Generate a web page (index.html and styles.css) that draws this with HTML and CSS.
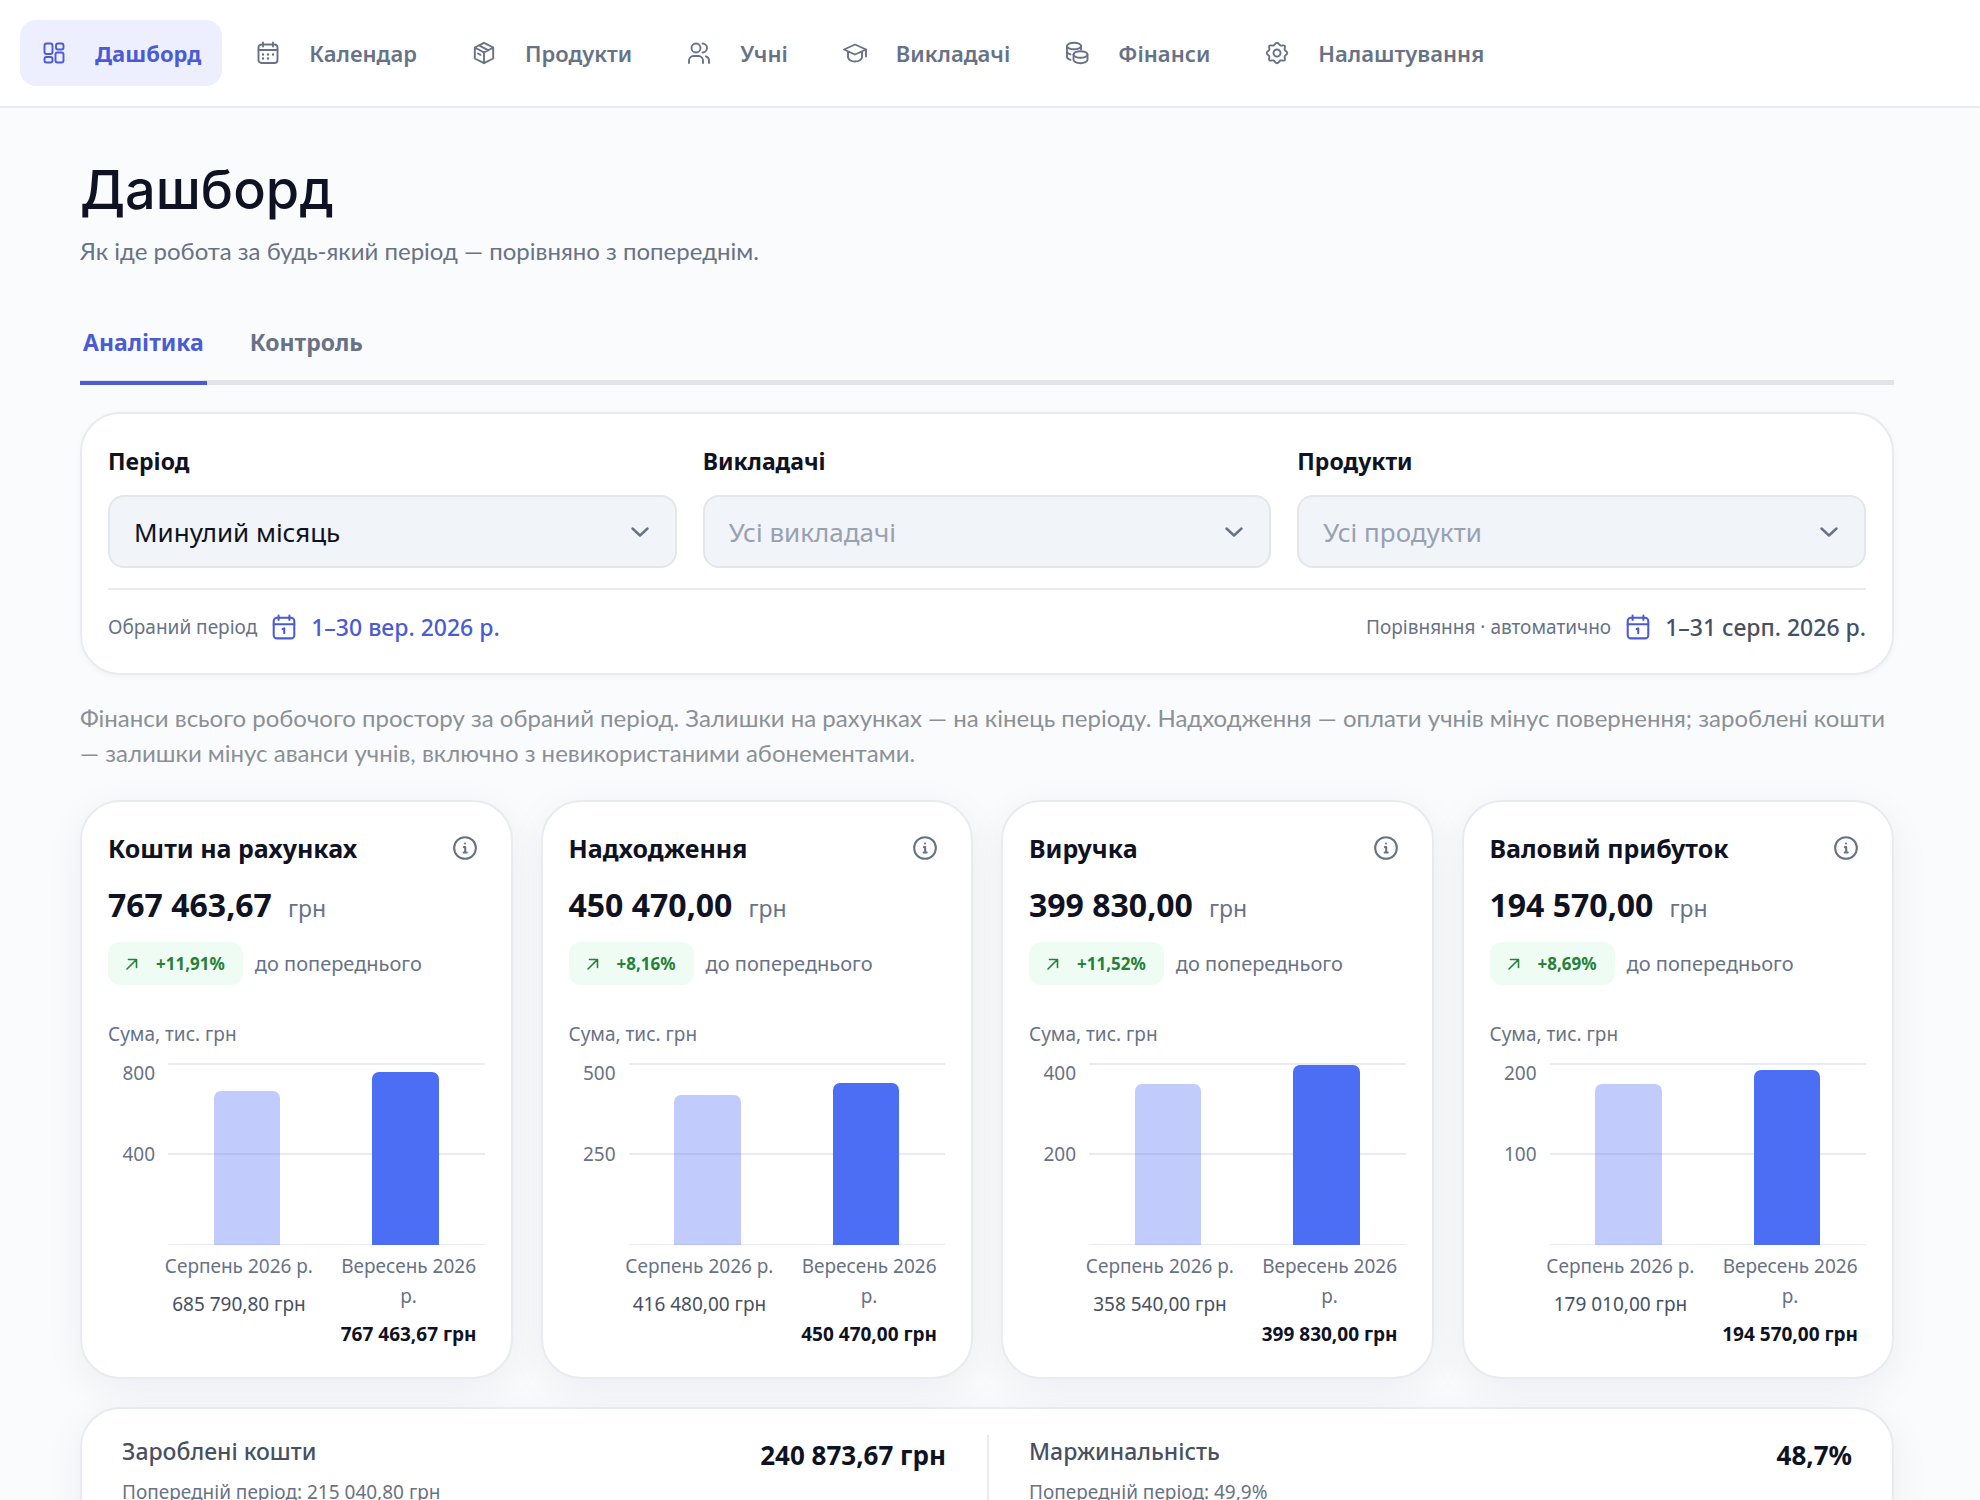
FILE: index.html
```html
<!DOCTYPE html>
<html lang="uk">
<head>
    <meta charset="UTF-8">
    <meta name="viewport" content="width=device-width, initial-scale=1.0">
    <title>Дашборд</title>
    <link rel="stylesheet" href="styles.css">
</head>
<body>
    <header class="topbar">
        <nav class="nav">
            <a href="#" class="nav-item active">
                <svg class="icon" viewBox="0 0 24 24"><rect x="2.5" y="2.5" width="8" height="10.5" rx="2"/><rect x="14" y="2.5" width="7.5" height="6" rx="2"/><rect x="2.5" y="16" width="8" height="5.5" rx="2"/><rect x="13.5" y="11.5" width="8" height="10" rx="2"/></svg>
                Дашборд
            </a>
            <a href="#" class="nav-item">
                <svg class="icon" viewBox="0 0 24 24"><path d="M7 1.5v4M17 1.5v4M2.5 9h19"/><rect x="2.5" y="3.5" width="19" height="18.5" rx="3"/><path class="dots" d="M7 13.5h.01M12 13.5h.01M17 13.5h.01M7 17.5h.01M12 17.5h.01"/></svg>
                Календар
            </a>
            <a href="#" class="nav-item">
                <svg class="icon" viewBox="0 0 24 24"><path d="M12 1.8l9.2 4.7v11L12 22.2l-9.2-4.7v-11zM2.8 6.5L12 11.5l9.2-5M12 11.5v10.7M7 4.3l9.5 5M6 12.500l2.500 1.300"/></svg>
                Продукти
            </a>
            <a href="#" class="nav-item">
                <svg class="icon" viewBox="0 0 24 24"><circle cx="9" cy="7" r="4.5"/><path d="M2 22v-2.5a4.5 4.5 0 0 1 4.5-4.5h5a4.5 4.5 0 0 1 4.500 4.500V22M15.500 2.500a4.500 4.500 0 0 1 0 9M19 15.300a4.500 4.500 0 0 1 3 4.200V22"/></svg>
                Учні
            </a>
            <a href="#" class="nav-item">
                <svg class="icon" viewBox="0 0 24 24"><path d="M1 8.500L12 3.500l11 5-11 5zM23 8.500v7M5 10.500v6c1 2.800 3.800 4 7 4s6-1.200 7-4v-6"/></svg>
                Викладачі
            </a>
            <a href="#" class="nav-item">
                <svg class="icon" viewBox="0 0 24 24"><ellipse cx="9" cy="5" rx="7" ry="3.300"/><path d="M2 5v5.500c0 1.300 1.500 2.300 3.500 2.900M16 5v3.500M2 10.500V16c0 1.300 1.500 2.300 3.500 2.900"/><ellipse cx="15.500" cy="13.500" rx="7" ry="3.300"/><path d="M8.500 13.500v5.200c0 1.900 3.100 3.500 7 3.500s7-1.600 7-3.500v-5.200"/></svg>
                Фінанси
            </a>
            <a href="#" class="nav-item">
                <svg class="icon" viewBox="0 0 24 24"><circle cx="12" cy="12" r="3.500"/><path d="M12 1.700c1.700 0 2 2.200 3.500 2.800s3.100-.8 4.100.2-.4 2.600.2 4.100 2.500 1.600 2.500 3.200-1.900 1.700-2.500 3.200.8 3.100-.2 4.100-2.600-.4-4.100.2-1.800 2.800-3.500 2.800-2-2.200-3.500-2.800-3.100.8-4.100-.2.4-2.600-.2-4.100S1.700 13.700 1.700 12s1.900-1.700 2.500-3.200-.8-3.100.2-4.100 2.600.4 4.100-.2S10.300 1.700 12 1.700z"/></svg>
                Налаштування
            </a>
        </nav>
    </header>

    <main class="page">
        <h1>Дашборд</h1>
        <p class="lead">Як іде робота за будь-який період — порівняно з попереднім.</p>

        <div class="tabs" role="tablist">
            <button class="tab active" role="tab" aria-selected="true">Аналітика</button>
            <button class="tab" role="tab" aria-selected="false">Контроль</button>
        </div>

        <section class="card filters">
            <div class="filter-grid">
                <div class="field">
                    <label for="period">Період</label>
                    <div class="select-wrap">
                        <select id="period"><option>Минулий місяць</option></select>
                        <svg class="chevron" viewBox="0 0 18 10"><path d="M1.500 1.500L9 8.500l7.500-7"/></svg>
                    </div>
                </div>
                <div class="field">
                    <label for="teachers">Викладачі</label>
                    <div class="select-wrap">
                        <select id="teachers" class="empty"><option>Усі викладачі</option></select>
                        <svg class="chevron" viewBox="0 0 18 10"><path d="M1.500 1.500L9 8.500l7.500-7"/></svg>
                    </div>
                </div>
                <div class="field">
                    <label for="products">Продукти</label>
                    <div class="select-wrap">
                        <select id="products" class="empty"><option>Усі продукти</option></select>
                        <svg class="chevron" viewBox="0 0 18 10"><path d="M1.500 1.500L9 8.500l7.500-7"/></svg>
                    </div>
                </div>
            </div>
            <div class="ranges">
                <div class="range">
                    <span class="range-name">Обраний період</span>
                    <svg class="icon" viewBox="0 0 24 24"><path d="M7 1.500v4M17 1.500v4M2.500 9.500h19M10.800 13.800l1.400-.5v4.400"/><rect x="2.500" y="3.500" width="19" height="19" rx="3"/></svg>
                    <strong>1–30 вер. 2026 р.</strong>
                </div>
                <div class="range compare">
                    <span class="range-name">Порівняння · автоматично</span>
                    <svg class="icon" viewBox="0 0 24 24"><path d="M7 1.500v4M17 1.500v4M2.500 9.500h19M10.800 13.800l1.400-.5v4.400"/><rect x="2.500" y="3.500" width="19" height="19" rx="3"/></svg>
                    <strong>1–31 серп. 2026 р.</strong>
                </div>
            </div>
        </section>

        <p class="note">Фінанси всього робочого простору за обраний період. Залишки на рахунках — на кінець періоду. Надходження — оплати учнів мінус повернення; зароблені кошти — залишки мінус аванси учнів, включно з невикористаними абонементами.</p>

        <!-- Картки генеруються з масиву metrics -->
        <section class="metrics" id="metrics"></section>

        <section class="card summary">
            <div class="summary-item">
                <div>
                    <h3>Зароблені кошти</h3>
                    <p>Попередній період: 215&nbsp;040,80&nbsp;грн</p>
                </div>
                <strong>240&nbsp;873,67&nbsp;грн</strong>
            </div>
            <div class="summary-item">
                <div>
                    <h3>Маржинальність</h3>
                    <p>Попередній період: 49,9%</p>
                </div>
                <strong>48,7%</strong>
            </div>
        </section>
    </main>

    <script>
        const metrics = [
            { title: "Кошти на рахунках", prev: 685790.80, value: 767463.67, change: "+11,91%", max: 800 },
            { title: "Надходження", prev: 416480, value: 450470, change: "+8,16%", max: 500 },
            { title: "Виручка", prev: 358540, value: 399830, change: "+11,52%", max: 400 },
            { title: "Валовий прибуток", prev: 179010, value: 194570, change: "+8,69%", max: 200 }
        ];

        const money = n => n.toFixed(2).replace('.', ',').replace(/\B(?=(\d{3})+,)/g, '\u00a0');
        const barHeight = (n, max) => (n / (max * 1000) * 100).toFixed(2);

        document.getElementById('metrics').innerHTML = metrics.map(m => `
            <article class="card metric">
                <div class="metric-head">
                    <h2>${m.title}</h2>
                    <button class="info" aria-label="${m.title}">
                        <svg class="icon" viewBox="0 0 24 24"><circle cx="12" cy="12" r="10"/><path d="M11 11.200h1.200v5M10.800 16.200h2.800M12 7.800h.01"/></svg>
                    </button>
                </div>
                <div class="amount"><strong>${money(m.value)}</strong><span>грн</span></div>
                <div class="delta">
                    <span class="chip"><svg viewBox="0 0 12 12"><path d="M1 11L10.500 1.500M2.500 1.500h8v8"/></svg>${m.change}</span>
                    <span class="delta-note">до попереднього</span>
                </div>
                <div class="chart-title">Сума, тис. грн</div>
                <div class="chart">
                    <div class="axis"><span>${m.max}</span><span>${m.max / 2}</span><span></span></div>
                    <div class="plot">
                        <div class="bar prev" style="height: ${barHeight(m.prev, m.max)}%"></div>
                        <div class="bar" style="height: ${barHeight(m.value, m.max)}%"></div>
                    </div>
                </div>
                <div class="legend">
                    <div><p>Серпень 2026&nbsp;р.</p><span>${money(m.prev)}&nbsp;грн</span></div>
                    <div><p>Вересень 2026 р.</p><strong>${money(m.value)}&nbsp;грн</strong></div>
                </div>
            </article>
        `).join('');
    </script>
</body>
</html>
```
FILE: styles.css
```css
:root {
    --primary: #4a5bd4;
    --bar: #4c6ef5;
    --text: #0f1222;
    --muted: #687286;
    --slate: #475062;
    --border: #e8ebef;
    --background: #fafbfd;
}

* {
    box-sizing: border-box;
    margin: 0;
    padding: 0;
}

body {
    background: var(--background);
    color: var(--text);
    font-family: 'Noto Sans', sans-serif;
    font-size: 22px;
}

/* scrolls without a visible scrollbar */
html {
    scrollbar-width: none;
}

button,
select {
    font-family: inherit;
    background: none;
    border: none;
}

svg {
    fill: none;
    stroke: currentColor;
    stroke-linecap: round;
    stroke-linejoin: round;
    flex-shrink: 0;
}

.icon {
    width: 26px;
    height: 26px;
    stroke-width: 1.9;
}

.dots {
    stroke-width: 2.4;
}

/* Navigation */
.topbar {
    background: #fff;
    border-bottom: 2px solid var(--border);
    padding: 20px;
}

.nav {
    display: flex;
    gap: 12px;
}

.nav-item {
    display: flex;
    align-items: center;
    gap: 28px;
    height: 66px;
    padding: 0 21px;
    border-radius: 16px;
    color: var(--muted);
    font-weight: 600;
    text-decoration: none;
    white-space: nowrap;
}

.nav-item.active {
    background: #eeeffe;
    color: var(--primary);
    font-weight: 700;
}

.nav .icon {
    width: 24px;
    height: 24px;
    margin: 0 1px;
}

/* Page */
.page {
    padding: 50px 86px 40px 80px;
}

h1 {
    font-family: 'Inter', sans-serif;
    font-size: 54px;
    font-weight: 500;
    line-height: 64px;
}

.lead {
    margin-top: 11px;
    color: var(--muted);
    font-family: 'Lato', sans-serif;
    font-size: 24px;
    line-height: 36px;
}

.tabs {
    display: flex;
    gap: 40px;
    margin-top: 55px;
    border-bottom: 5px solid #e1e5e9;
}

.tab {
    margin-bottom: -5px;
    padding: 0 3px 21px;
    border-bottom: 4px solid transparent;
    color: var(--muted);
    font-size: 23px;
    font-weight: 700;
    line-height: 36px;
}

.tab.active {
    color: var(--primary);
    border-color: var(--primary);
    border-radius: 3px 3px 0 0;
}

.card {
    background: #fff;
    border: 2px solid var(--border);
    border-radius: 40px;
}

/* Filters */
.filters {
    margin-top: 27px;
    padding: 31px 26px 28px;
    box-shadow: 0 2px 6px rgba(15, 23, 42, 0.04);
}

.filter-grid {
    display: grid;
    grid-template-columns: repeat(3, 1fr);
    gap: 26px;
}

.field label {
    display: block;
    margin-bottom: 18px;
    font-size: 23px;
    font-weight: 700;
    line-height: 32px;
}

.select-wrap {
    position: relative;
}

select {
    display: block;
    appearance: none;
    width: 100%;
    height: 73px;
    padding: 0 60px 0 24px;
    border: 2px solid #e3e7eb;
    border-radius: 16px;
    background: #f1f4f8;
    color: var(--text);
    font-size: 26px;
}

select.empty {
    color: #98a1b1;
}

.chevron {
    position: absolute;
    top: 32px;
    right: 28px;
    width: 18px;
    height: 10px;
    color: var(--muted);
    stroke-width: 2.4;
    pointer-events: none;
}

.ranges {
    display: flex;
    justify-content: space-between;
    margin-top: 20px;
    padding-top: 19px;
    border-top: 2px solid var(--border);
}

.range {
    display: flex;
    align-items: center;
    gap: 14px;
    color: var(--primary);
    line-height: 36px;
}

.range-name {
    color: var(--muted);
    font-size: 19px;
}

.range strong {
    font-size: 23px;
    font-weight: 500;
}

.compare strong {
    color: var(--slate);
}

.note {
    margin: 25px 0 30px;
    color: #8b9096;
    font-family: 'Lato', sans-serif;
    font-size: 24px;
    line-height: 35px;
}

/* Metric cards */
.metrics {
    display: grid;
    grid-template-columns: repeat(4, 1fr);
    gap: 28px;
}

.metric {
    padding: 28px 26px;
    box-shadow: 0 10px 40px rgba(15, 23, 42, 0.06);
}

.metric-head {
    display: flex;
    align-items: center;
    justify-content: space-between;
}

h2 {
    font-size: 25px;
    font-weight: 700;
    line-height: 36px;
}

.info {
    display: flex;
    padding: 0 7px;
    color: var(--muted);
}

.amount {
    display: flex;
    align-items: baseline;
    gap: 16px;
    margin-top: 17px;
    line-height: 44px;
}

.amount strong {
    font-size: 32px;
}

.amount span {
    color: var(--muted);
    font-size: 23px;
}

.delta {
    display: flex;
    align-items: center;
    gap: 12px;
    margin-top: 12px;
}

.chip {
    display: flex;
    align-items: center;
    gap: 18px;
    height: 43px;
    padding: 0 18px;
    border-radius: 12px;
    background: #effcf3;
    color: #26803a;
    font-size: 17px;
    font-weight: 700;
}

.chip svg {
    width: 12px;
    height: 12px;
    stroke-width: 1.6;
}

.delta-note {
    color: var(--muted);
    font-size: 20px;
}

.chart-title {
    margin: 35px 0 15px;
    color: var(--muted);
    font-size: 19px;
    line-height: 28px;
}

.chart {
    display: flex;
    gap: 13px;
    height: 182px;
}

.axis {
    display: flex;
    flex-direction: column;
    justify-content: space-between;
    width: 47px;
    color: var(--muted);
    font-size: 19px;
    line-height: 20px;
    text-align: right;
}

.axis span {
    height: 20px;
}

.plot {
    position: relative;
    flex: 1;
    display: flex;
    align-items: flex-end;
    justify-content: space-around;
    border-top: 2px solid var(--border);
}

/* middle and bottom grid lines */
.plot::before {
    content: '';
    position: absolute;
    inset: 88px 0 0;
    border: solid var(--border);
    border-width: 2px 0 1px;
}

.bar {
    position: relative;
    width: 21%;
    border-radius: 7px 7px 0 0;
    background: var(--bar);
}

.bar.prev {
    background: rgba(76, 110, 245, 0.35);
}

.legend {
    display: grid;
    grid-template-columns: 1fr 1fr;
    gap: 18px;
    margin: 6px 0 0 55px;
    color: var(--slate);
    font-size: 19px;
    line-height: 30px;
    text-align: center;
}

.legend p {
    margin-bottom: 8px;
    color: var(--muted);
}

.legend span,
.legend strong {
    white-space: nowrap;
}

.legend strong {
    color: var(--text);
}

/* Summary */
.summary {
    display: grid;
    grid-template-columns: 1fr 1fr;
    margin-top: 28px;
    padding: 26px;
    box-shadow: 0 10px 40px rgba(15, 23, 42, 0.06);
}

.summary-item {
    display: flex;
    justify-content: space-between;
    padding: 0 41px 0 14px;
}

.summary-item + .summary-item {
    padding: 0 14px 0 40px;
    border-left: 2px solid var(--border);
}

h3 {
    color: var(--slate);
    font-size: 23px;
    font-weight: 500;
    line-height: 32px;
}

.summary p {
    margin-top: 10px;
    color: var(--muted);
    font-size: 19px;
    line-height: 30px;
}

.summary strong {
    font-size: 26px;
    line-height: 40px;
}

@media (max-width: 1200px) {
    .metrics {
        grid-template-columns: repeat(2, 1fr);
    }

    .filter-grid,
    .summary {
        grid-template-columns: 1fr;
    }

    .nav {
        flex-wrap: wrap;
    }
}
```
